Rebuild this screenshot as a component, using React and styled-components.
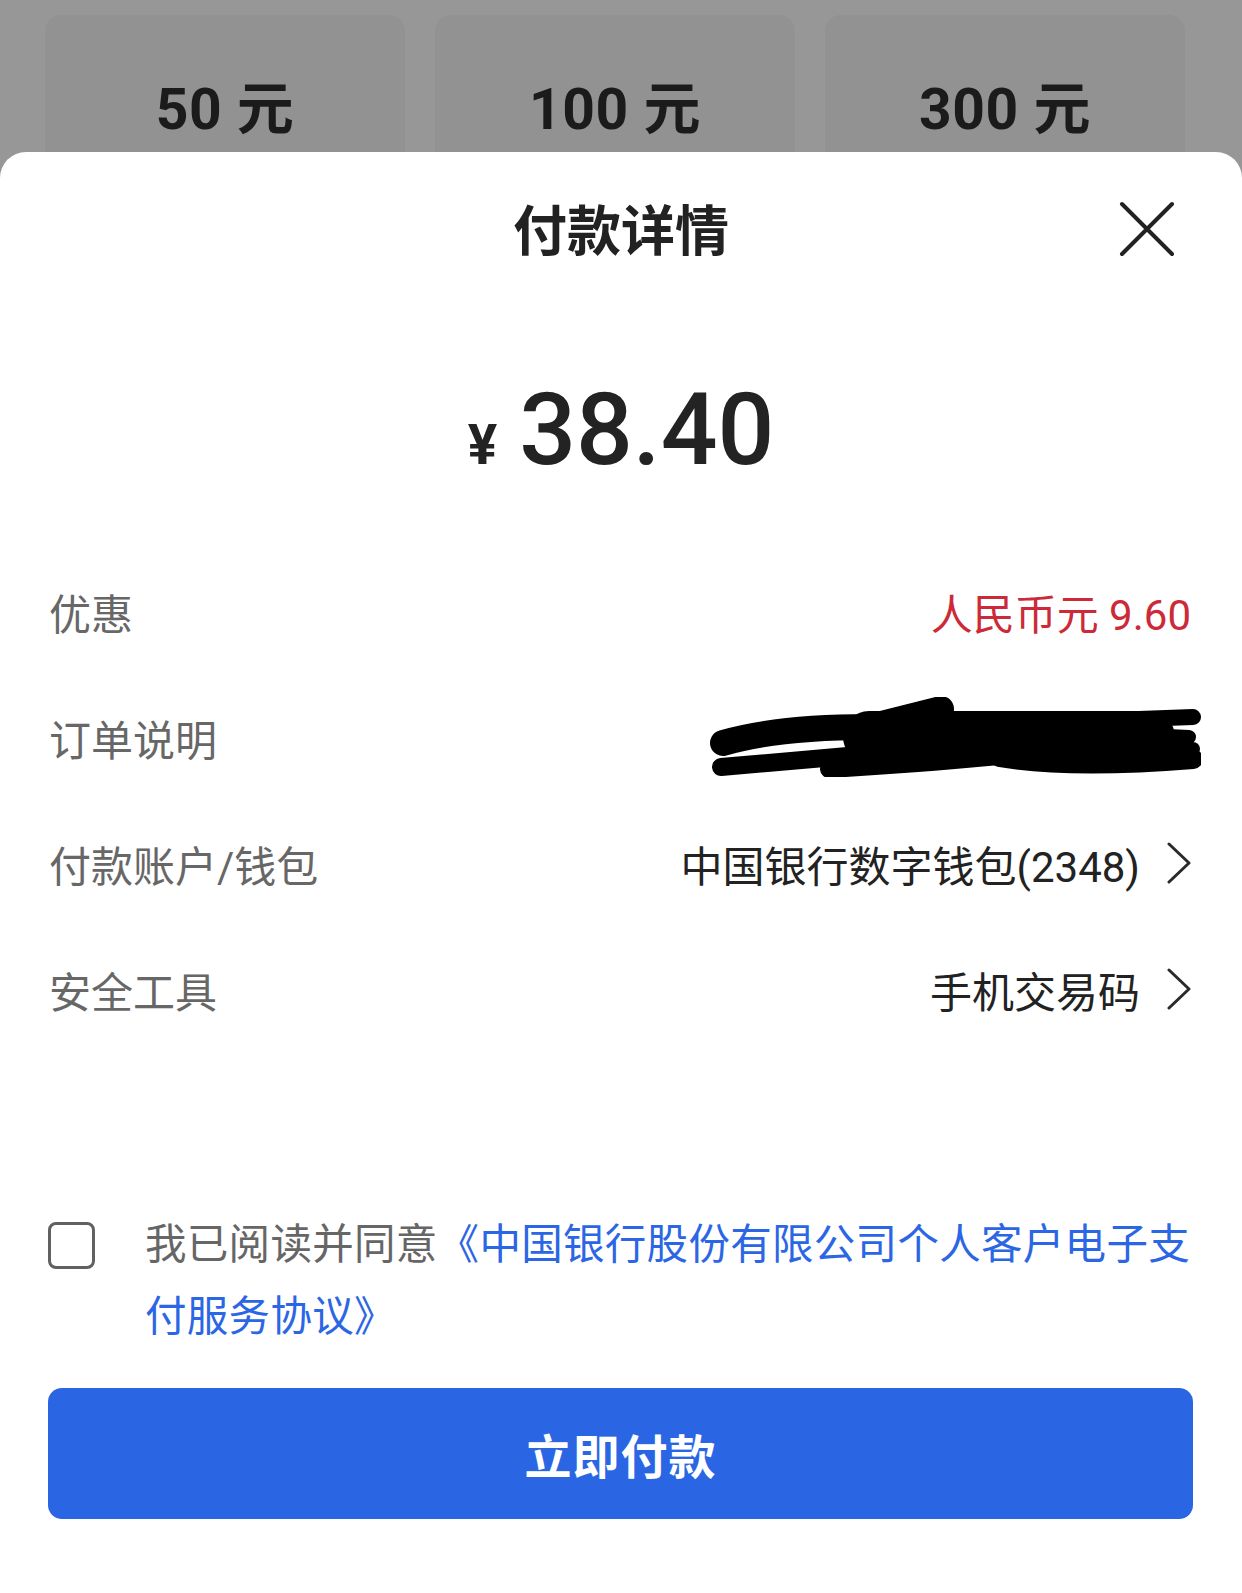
import React from "react";
import styled, { createGlobalStyle } from "styled-components";

const Global = createGlobalStyle`
  html, body { margin: 0; padding: 0; }
  body {
    background: #979797;
    font-family: Roboto, "Noto Sans CJK SC", "Noto Sans", sans-serif;
    -webkit-font-smoothing: antialiased;
  }
`;

const Page = styled.div`
  width: 1242px;
  height: 1593px;
  overflow: hidden;
  display: flex;
  flex-direction: column;
`;

const Backdrop = styled.div`
  height: 152px;
  flex: none;
  overflow: hidden;
  box-sizing: border-box;
  padding: 15px 0 0 45px;
  display: grid;
  grid-template-columns: repeat(3, 360px);
  column-gap: 30px;
  align-items: start;
`;

const AmountCard = styled.div`
  height: 178px;
  border-radius: 16px;
  background: #929292;
  display: flex;
  align-items: center;
  justify-content: center;
  font-size: 57px;
  font-weight: 700;
  color: #1b1b1b;
  letter-spacing: 0.5px;
`;

const Sheet = styled.div`
  flex: 1;
  background: #fff;
  border-radius: 26px 26px 0 0;
  display: flex;
  flex-direction: column;
`;

const Header = styled.div`
  height: 154px;
  display: grid;
  grid-template-columns: 1fr auto 1fr;
  align-items: center;
  padding: 0 67px;
`;

const Title = styled.div`
  grid-column: 2;
  font-size: 54px;
  font-weight: 600;
  color: #222;
  line-height: 1;
  margin-top: 8px;
`;

const CloseButton = styled.div`
  grid-column: 3;
  justify-self: end;
  width: 56px;
  height: 56px;
  display: flex;
  svg { display: block; }
`;

const Amount = styled.div`
  margin-top: 64px;
  height: 120px;
  display: flex;
  justify-content: center;
  align-items: baseline;
  gap: 22px;
  line-height: 120px;
  color: #232323;
`;

const Currency = styled.span`
  font-size: 55px;
  font-weight: 700;
`;

const Figure = styled.span`
  font-size: 100px;
  font-weight: 500;
`;

const Rows = styled.div`
  margin-top: 58px;
  display: flex;
  flex-direction: column;
`;

const Row = styled.div`
  height: 126px;
  display: flex;
  align-items: center;
  justify-content: space-between;
  padding: 0 51px 0 49px;
  font-size: 42px;
`;

const Label = styled.span`
  color: #676767;
`;

const Value = styled.span`
  display: flex;
  align-items: center;
  gap: 27px;
  color: ${(p) => (p.$tone === "red" ? "#cc2a38" : "#222")};
  margin-right: ${(p) => p.$shift || 0}px;
  svg { display: block; }
`;

const Agreement = styled.div`
  margin-top: 157px;
  display: flex;
  align-items: flex-start;
  gap: 50px;
  padding: 0 49px 0 48px;
`;

const Checkbox = styled.div`
  flex: none;
  width: 47px;
  height: 47px;
  margin-top: 13px;
  box-sizing: border-box;
  border: 3.5px solid #616161;
  border-radius: 8px;
`;

const AgreementText = styled.p`
  margin: 0;
  flex: 1;
  font-size: 41.5px;
  line-height: 72px;
  color: #666;
  letter-spacing: 0.3px;
`;

const Link = styled.span`
  color: #2b66e4;
`;

const PayButton = styled.button`
  margin: 35px 49px 0 48px;
  height: 131px;
  border: none;
  border-radius: 14px;
  background: #2a66e4;
  color: #fff;
  font-family: inherit;
  font-size: 47px;
  font-weight: 600;
  letter-spacing: 1px;
`;

const Chevron = () => (
  <svg width="24" height="42" viewBox="0 0 24 42">
    <path d="M2 2 L22 21 L2 40" fill="none" stroke="#2a2a2a" strokeWidth="3" strokeLinecap="round" strokeLinejoin="round" />
  </svg>
);

const Scribble = () => (
  <svg width="492" height="80" viewBox="0 0 492 80">
    <g fill="none" stroke="#000" strokeLinecap="round" strokeLinejoin="round">
      <path d="M14 46 Q70 30 160 30 L232 12" strokeWidth="26" />
      <path d="M160 40 L440 40" strokeWidth="52" />
      <path d="M430 22 L484 20" strokeWidth="16" />
      <path d="M436 38 L480 40" strokeWidth="14" />
      <path d="M430 54 L484 52" strokeWidth="14" />
      <path d="M12 70 L150 58" strokeWidth="18" />
      <path d="M120 72 Q220 66 300 58" strokeWidth="18" />
      <path d="M290 60 Q360 72 484 62" strokeWidth="20" />
    </g>
  </svg>
);

const rows = [
  { label: "优惠", value: "人民币元 9.60", tone: "red" },
  { label: "订单说明", scribble: true },
  { label: "付款账户/钱包", value: "中国银行数字钱包(2348)", chevron: true },
  { label: "安全工具", value: "手机交易码", chevron: true },
];

export default function App() {
  return (
    <Page>
      <Global />
      <Backdrop>
        {["50 元", "100 元", "300 元"].map((t) => (
          <AmountCard key={t}>{t}</AmountCard>
        ))}
      </Backdrop>
      <Sheet>
        <Header>
          <Title>付款详情</Title>
          <CloseButton>
            <svg width="56" height="56" viewBox="0 0 56 56">
              <path d="M3 3 L53 53 M53 3 L3 53" stroke="#222" strokeWidth="4" strokeLinecap="round" />
            </svg>
          </CloseButton>
        </Header>
        <Amount>
          <Currency>¥</Currency>
          <Figure>38.40</Figure>
        </Amount>
        <Rows>
          {rows.map((r) => (
            <Row key={r.label}>
              <Label>{r.label}</Label>
              {r.scribble ? (
                <Value $shift={-10}>
                  <Scribble />
                </Value>
              ) : (
                <Value $tone={r.tone}>
                  {r.value}
                  {r.chevron && <Chevron />}
                </Value>
              )}
            </Row>
          ))}
        </Rows>
        <Agreement>
          <Checkbox />
          <AgreementText>
            我已阅读并同意<Link>《中国银行股份有限公司个人客户电子支付服务协议》</Link>
          </AgreementText>
        </Agreement>
        <PayButton>立即付款</PayButton>
      </Sheet>
    </Page>
  );
}
